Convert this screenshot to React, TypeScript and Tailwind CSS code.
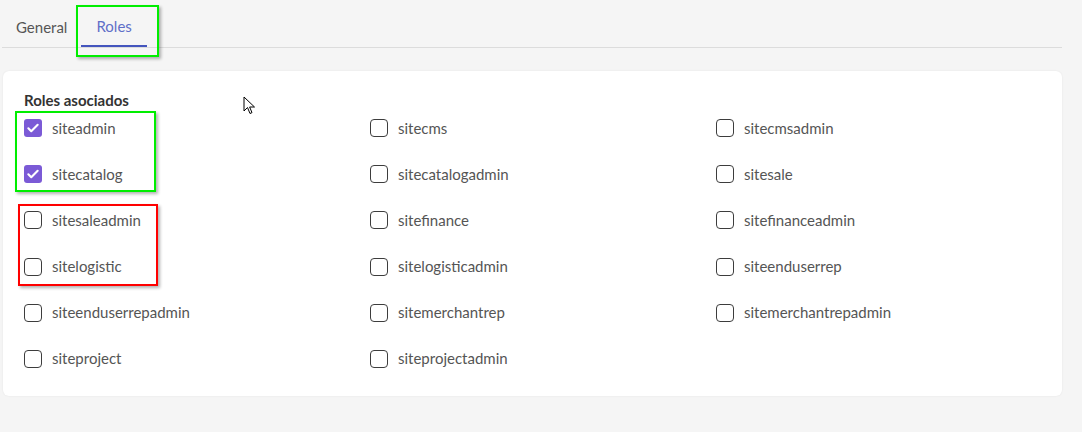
import React from "react";

const roles = [
   { name: "siteadmin", checked: true },
   { name: "sitecms", checked: false },
   { name: "sitecmsadmin", checked: false },
   { name: "sitecatalog", checked: true },
   { name: "sitecatalogadmin", checked: false },
   { name: "sitesale", checked: false },
   { name: "sitesaleadmin", checked: false },
   { name: "sitefinance", checked: false },
   { name: "sitefinanceadmin", checked: false },
   { name: "sitelogistic", checked: false },
   { name: "sitelogisticadmin", checked: false },
   { name: "siteenduserrep", checked: false },
   { name: "siteenduserrepadmin", checked: false },
   { name: "sitemerchantrep", checked: false },
   { name: "sitemerchantrepadmin", checked: false },
   { name: "siteproject", checked: false },
   { name: "siteprojectadmin", checked: false },
];

function RoleCheckbox({ name, checked }: { name: string; checked: boolean }) {
   return (
      <label className="flex items-center h-[18px] gap-[10px] cursor-pointer">
         {checked ? (
            <span className="w-[18px] h-[18px] rounded-[3px] bg-[#7b5ad6] flex items-center justify-center">
               <svg width="14" height="14" viewBox="0 0 24 24" fill="none">
                  <path d="M4 12.5l5 5L20 6.5" stroke="white" strokeWidth="3.6" strokeLinecap="round" strokeLinejoin="round" />
               </svg>
            </span>
         ) : (
            <span className="w-[18px] h-[18px] rounded-[4px] border-[1.5px] border-[#3d3d3d] bg-white" />
         )}
         <span className="text-[15px] text-[#555] leading-none">{name}</span>
      </label>
   );
}

export default function App() {
   return (
      <div className="relative w-[1082px] h-[432px] bg-[#f5f5f5] font-['Lato','Open_Sans',sans-serif] overflow-hidden">
         {/* Tabs */}
         <div className="ml-[2px] w-[1060px] pt-[8px] flex border-b border-[#dcdcdc]">
            <div className="px-[14px] h-[39px] flex items-center text-[15px] text-[#555]">General</div>
            <div className="px-[15px] h-[39px] flex items-center text-[15px] text-[#5f6fc8] border-b-2 border-[#4455bd] -mb-px">
               Roles
            </div>
         </div>

         {/* Card */}
         <div className="ml-[3px] mt-[23px] w-[1059px] bg-white rounded-[6px] shadow-[0_0_2px_rgba(0,0,0,0.08)] pt-[19px] pb-[28px] pl-[21px]">
            <h3 className="text-[15px] font-bold text-[#333] leading-[20px]">Roles asociados</h3>
            <div className="mt-[9px] grid grid-cols-[346px_346px_346px] gap-y-[28.2px]">
               {roles.map((r) => (
                  <RoleCheckbox key={r.name} name={r.name} checked={r.checked} />
               ))}
            </div>
         </div>

         {/* Annotation boxes */}
         <div className="absolute left-[76px] top-[5px] w-[83px] h-[52px] border-2 border-[#00ee00] shadow-[2px_2px_3px_rgba(0,0,0,0.3)]" />
         <div className="absolute left-[15px] top-[111px] w-[141px] h-[81px] border-2 border-[#00ee00] shadow-[2px_2px_3px_rgba(0,0,0,0.3)]" />
         <div className="absolute left-[18px] top-[204px] w-[140px] h-[82px] border-2 border-[#ff0000] shadow-[2px_2px_3px_rgba(0,0,0,0.3)]" />

         {/* Cursor */}
         <svg className="absolute left-[243px] top-[96px]" width="13" height="20" viewBox="0 0 13 20">
            <path d="M1 1 L1 15 L4.5 11.5 L7 17.5 L9 16.6 L6.6 11 L11.5 11 Z" fill="white" stroke="black" strokeWidth="1" strokeLinejoin="round" />
         </svg>
      </div>
   );
}
